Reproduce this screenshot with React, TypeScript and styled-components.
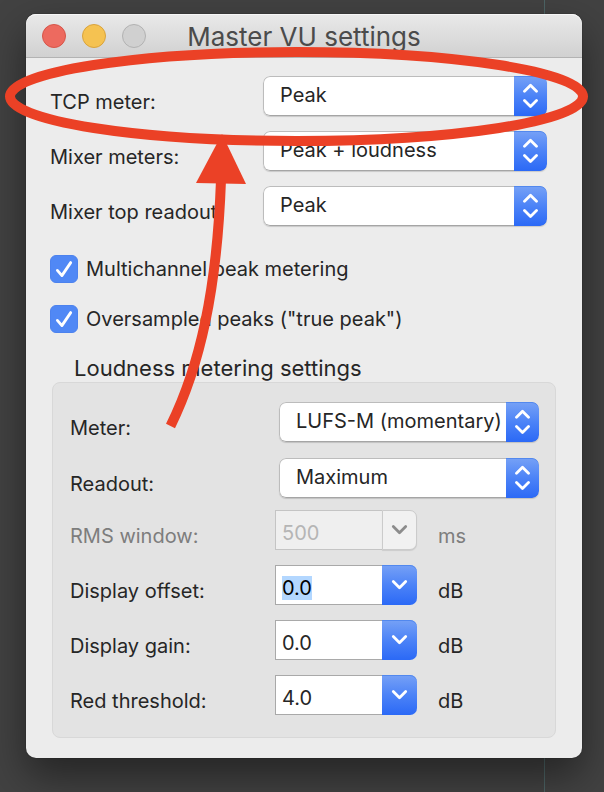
import React, { useEffect, useRef } from 'react';
import styled, { createGlobalStyle, css } from 'styled-components';

const GlobalStyle = createGlobalStyle`
  *, *::before, *::after { box-sizing: border-box; }
  body { margin: 0; background: #424242; }
  body, input, select, button { font-family: Inter, "Liberation Sans", sans-serif; font-size: 20px; }
`;

const blueFill = css`
  background: linear-gradient(#76a1f6 0%, #4c83f7 50%, #2b69f6 100%);
  box-shadow: inset 0 1px 0 #5288ee;
`;

const Desktop = styled.main`
  position: relative;
  min-height: 100vh;
  padding: 14px 22px 34px 26px;
  overflow: hidden;
  color: #262626;
  background: linear-gradient(#4d6465, #4d6465) calc(100% - 59px) 0 / 1px 100% no-repeat, #424242;
`;

const Dialog = styled.section`
  border-radius: 10px;
  background: #ececec;
  box-shadow: 0 0 1px #111, 0 18px 40px rgba(0, 0, 0, 0.45);
`;

const TitleBar = styled.header`
  display: grid;
  grid-template-columns: 1fr auto 1fr;
  align-items: center;
  height: 44px;
  padding: 0 16px;
  border-radius: 10px 10px 0 0;
  border-bottom: 1px solid #b3b3b3;
  background: linear-gradient(#e9e9e9, #d1d1d1);
  box-shadow: inset 0 1px 0 #f6f6f6;
`;

const WindowButtons = styled.div`
  display: flex;
  gap: 16px;
`;

const WindowButton = styled.button<{ $fill: string; $edge: string }>`
  width: 24px;
  height: 24px;
  padding: 0;
  border: 1px solid ${(p) => p.$edge};
  border-radius: 50%;
  background: ${(p) => p.$fill};
`;

const Title = styled.h1`
  margin: 0;
  padding-top: 2px;
  font-size: 26px;
  font-weight: 400;
  line-height: 32px;
  color: #4b4b4b;
`;

const Content = styled.div`
  padding: 18px 26px 20px;
`;

const MeterRows = styled.div`
  display: grid;
  gap: 15px;
  padding-right: 9px;
  margin-left: -2px;
`;

const Row = styled.div<{ $labelWidth: number }>`
  display: grid;
  grid-template-columns: ${(p) => p.$labelWidth}px 1fr;
  height: 40px;
`;

const Label = styled.label<{ $disabled?: boolean }>`
  padding-top: 12px;
  line-height: 28px;
  white-space: nowrap;
  color: ${(p) => (p.$disabled ? '#7d7d7d' : 'inherit')};
`;

const SelectFrame = styled.div`
  display: grid;
  grid-template-columns: 1fr 33px;
  height: 40px;
  border-radius: 7px;
  overflow: hidden;
  box-shadow: 0 1px 1px rgba(0, 0, 0, 0.15);
`;

const SelectBox = styled.select`
  grid-area: 1 / 1 / 2 / 3;
  width: 100%;
  min-width: 0;
  padding: 0 33px 2px 16px;
  appearance: none;
  border: 1px solid #bcbcbc;
  border-bottom-color: #a5a5a5;
  border-radius: 7px;
  outline: none;
  background: #fff;
  color: #262626;
`;

const SelectArrows = styled.span`
  grid-area: 1 / 2;
  z-index: 1;
  display: grid;
  place-items: center;
  border-radius: 0 7px 7px 0;
  pointer-events: none;
  ${blueFill}
`;

const Checks = styled.div`
  display: grid;
  gap: 22px;
  margin: 29px 0 0 -2px;
`;

const CheckLabel = styled.label`
  display: flex;
  align-items: center;
  gap: 8px;
  height: 28px;
`;

const CheckFrame = styled.span`
  display: grid;
  width: 28px;
  height: 28px;

  & > * { grid-area: 1 / 1; }
  & > svg { pointer-events: none; }
  & > input:not(:checked) + svg { display: none; }
`;

const CheckInput = styled.input`
  width: 28px;
  height: 28px;
  margin: 0;
  appearance: none;
  border: 1px solid #b5b5b5;
  border-radius: 6px;
  background: #fff;

  &:checked {
    border-color: #4c82ee;
    background: #5088f5;
  }
`;

const Group = styled.fieldset`
  min-width: 0;
  margin: 21px 0 0;
  padding: 0;
  border: 0;
`;

const GroupTitle = styled.legend`
  padding: 0 0 0 22px;
  font-size: 22px;
  line-height: 28px;
`;

const GroupPanel = styled.div`
  display: grid;
  gap: 12px;
  padding: 19px 16px 22px 17px;
  border: 1px solid #d8d8d8;
  border-radius: 8px;
  background: #e3e3e3;
`;

const SelectRows = styled.div`
  display: grid;
  gap: 16px;
`;

const FieldRows = styled.div`
  display: grid;
  gap: 15px;
`;

const Field = styled.div`
  display: flex;
`;

const FieldInput = styled.input`
  width: 107px;
  height: 40px;
  padding: 6px 6px 0;
  border: 1px solid #a9a9a9;
  border-right: 0;
  border-radius: 0;
  outline: none;
  background: #fff;
  color: #262626;

  &::selection { background: #b3d7ff; color: #000; }
  &:disabled { border-color: #c4c4c4; background: #efefef; color: #b5b5b5; }
`;

const FieldButton = styled.button`
  display: grid;
  place-items: center;
  width: 35px;
  height: 40px;
  padding: 0;
  border: 0;
  border-radius: 0 7px 7px 0;
  color: #fff;
  ${blueFill}

  &:disabled {
    border: 1px solid #cbcbcb;
    background: #f1f1f1;
    box-shadow: 0 1px 1px rgba(0, 0, 0, 0.1);
    color: #8c8c8c;
  }
`;

const Unit = styled.span<{ $disabled?: boolean }>`
  padding: 12px 0 0 21px;
  line-height: 28px;
  color: ${(p) => (p.$disabled ? '#7d7d7d' : 'inherit')};
`;

const Annotation = styled.svg`
  position: absolute;
  top: 0;
  left: 0;
  z-index: 2;
  pointer-events: none;
`;

type PopupProps = { id: string; label: string; value: string; options: string[]; labelWidth: number };

function Popup({ id, label, value, options, labelWidth }: PopupProps) {
  return (
    <Row $labelWidth={labelWidth}>
      <Label htmlFor={id}>{label}</Label>
      <SelectFrame>
        <SelectBox id={id} defaultValue={value}>
          {options.map((option) => <option key={option}>{option}</option>)}
        </SelectBox>
        <SelectArrows>
          <svg width="15" height="26" viewBox="0 0 15 26" fill="none" stroke="#fff" strokeWidth="2.8" strokeLinecap="round" strokeLinejoin="round" aria-hidden="true">
            <path d="M1.5 8.2 7.5 2.2l6 6M1.5 17.6l6 6 6-6" />
          </svg>
        </SelectArrows>
      </SelectFrame>
    </Row>
  );
}

function Check({ label }: { label: string }) {
  return (
    <CheckLabel>
      <CheckFrame>
        <CheckInput type="checkbox" defaultChecked />
        <svg width="28" height="28" viewBox="0 0 28 28" fill="none" stroke="#fff" strokeWidth="2.8" strokeLinecap="round" strokeLinejoin="round" aria-hidden="true">
          <path d="m7.4 15.4 4.5 5.2 8.8-13" />
        </svg>
      </CheckFrame>
      {label}
    </CheckLabel>
  );
}

type ComboProps = { id: string; label: string; value: string; unit: string; disabled?: boolean; selected?: boolean };

function Combo({ id, label, value, unit, disabled, selected }: ComboProps) {
  const input = useRef<HTMLInputElement>(null);
  useEffect(() => {
    if (selected) {
      input.current?.focus();
      input.current?.select();
    }
  }, [selected]);

  return (
    <Row $labelWidth={205}>
      <Label htmlFor={id} $disabled={disabled}>{label}</Label>
      <Field>
        <FieldInput id={id} ref={input} type="text" defaultValue={value} disabled={disabled} />
        <FieldButton type="button" disabled={disabled} aria-label={`${label} presets`}>
          <svg width="17" height="12" viewBox="0 0 17 12" fill="none" stroke="currentColor" strokeWidth="2.8" strokeLinecap="round" strokeLinejoin="round" aria-hidden="true">
            <path d="m2.3 2.6 6.2 6.2 6.2-6.2" />
          </svg>
        </FieldButton>
        <Unit $disabled={disabled}>{unit}</Unit>
      </Field>
    </Row>
  );
}

export default function App() {
  return (
    <Desktop>
      <GlobalStyle />
      <Dialog aria-labelledby="title">
        <TitleBar>
          <WindowButtons>
            <WindowButton type="button" aria-label="Close" $fill="#ed6a5f" $edge="#d65549" />
            <WindowButton type="button" aria-label="Minimize" $fill="#f5c251" $edge="#d9a33c" />
            <WindowButton type="button" aria-label="Zoom" disabled $fill="#d0d0d0" $edge="#b2b2b2" />
          </WindowButtons>
          <Title id="title">Master VU settings</Title>
        </TitleBar>
        <Content>
          <MeterRows>
            <Popup id="tcp" label="TCP meter:" value="Peak" options={['Peak', 'Peak + loudness']} labelWidth={213} />
            <Popup id="mixer" label="Mixer meters:" value="Peak + loudness" options={['Peak', 'Peak + loudness']} labelWidth={213} />
            <Popup id="top" label="Mixer top readout:" value="Peak" options={['Peak', 'Loudness']} labelWidth={213} />
          </MeterRows>
          <Checks>
            <Check label="Multichannel peak metering" />
            <Check label={'Oversampled peaks ("true peak")'} />
          </Checks>
          <Group>
            <GroupTitle>Loudness metering settings</GroupTitle>
            <GroupPanel>
              <SelectRows>
                <Popup id="meter" label="Meter:" value="LUFS-M (momentary)" options={['LUFS-M (momentary)', 'LUFS-S (short-term)']} labelWidth={209} />
                <Popup id="readout" label="Readout:" value="Maximum" options={['Maximum', 'Current']} labelWidth={209} />
              </SelectRows>
              <FieldRows>
                <Combo id="rms" label="RMS window:" value="500" unit="ms" disabled />
                <Combo id="offset" label="Display offset:" value="0.0" unit="dB" selected />
                <Combo id="gain" label="Display gain:" value="0.0" unit="dB" />
                <Combo id="red" label="Red threshold:" value="4.0" unit="dB" />
              </FieldRows>
            </GroupPanel>
          </Group>
        </Content>
      </Dialog>
      <Annotation width="604" height="440" viewBox="0 0 604 440" fill="none" stroke="#eb4126" strokeWidth="10" aria-hidden="true">
        <ellipse cx="296.5" cy="96.5" rx="286.5" ry="44.5" />
        <path d="M170.5 426C200 366 217 290 221 180" />
        <path d="M222 134 246 184 196 183Z" fill="#eb4126" stroke="none" />
      </Annotation>
    </Desktop>
  );
}
